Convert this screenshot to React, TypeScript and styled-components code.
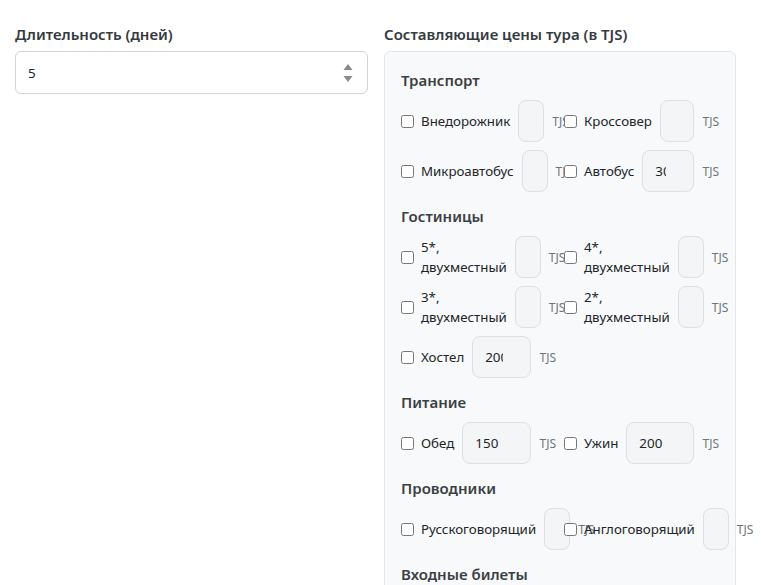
import React from "react";
import styled, { createGlobalStyle } from "styled-components";

const Global = createGlobalStyle`
  html, body { margin: 0; padding: 0; background: #fff; }
  body { font-family: "Noto Sans", "Open Sans", sans-serif; color: #212529; }
  * { box-sizing: border-box; }
`;

const Page = styled.div`
  display: grid;
  grid-template-columns: 353px 352px;
  column-gap: 16px;
  padding: 24px 0 0 15px;
  align-items: start;
`;

const Column = styled.div`
  display: flex;
  flex-direction: column;
  gap: 7px;
`;

const FieldLabel = styled.div`
  font-size: 15px;
  line-height: 20px;
  font-weight: 600;
  color: #343a40;
`;

const NumberField = styled.div`
  display: flex;
  align-items: center;
  height: 43px;
  border: 1px solid #ced4da;
  border-radius: 6px;
  background: #fff;
  padding: 0 14px 0 12px;
`;

const PlainInput = styled.input`
  flex: 1;
  min-width: 0;
  border: none;
  outline: none;
  background: transparent;
  font: inherit;
  font-size: 13.4px;
  color: #212529;
  padding: 0;
`;

const Box = styled.div`
  background: #f8f9fa;
  border: 1px solid #e4e7ea;
  border-radius: 6px;
  padding: 17px 16px 20px;
  display: flex;
  flex-direction: column;
  gap: 13px;
  min-height: 560px;
`;

const Section = styled.section`
  display: flex;
  flex-direction: column;
  gap: 9px;
`;

const SectionTitle = styled.div`
  font-size: 15px;
  line-height: 22px;
  font-weight: 600;
  color: #3a3f44;
`;

const Grid = styled.div`
  display: grid;
  grid-template-columns: 155px 155px;
  column-gap: 8px;
  row-gap: 8px;
`;

const Item = styled.div`
  display: flex;
  align-items: center;
  min-width: 0;
`;

const Check = styled.input`
  width: 13px;
  height: 13px;
  margin: 0 7px 0 0;
  flex: none;
`;

const ItemLabel = styled.label`
  font-size: 13.3px;
  line-height: 20px;
  color: #212529;
  flex: 0 1 auto;
  min-width: min-content;
  margin-right: 8px;
`;

const PriceInput = styled.input`
  flex: 1 1 0;
  width: 0;
  min-width: 0;
  height: 42px;
  padding: 0 12px;
  border: 1px solid #dcdfe3;
  border-radius: 8px;
  background: #f4f5f6;
  font: inherit;
  font-size: 13.4px;
  color: #212529;
  outline: none;
`;

const Currency = styled.span`
  flex: none;
  margin-left: 8px;
  font-size: 12px;
  color: #6c757d;
`;

type Entry = { name: string; value?: string };

const sections: { title: string; items: Entry[] }[] = [
  {
    title: "Транспорт",
    items: [
      { name: "Внедорожник" },
      { name: "Кроссовер" },
      { name: "Микроавтобус" },
      { name: "Автобус", value: "300" },
    ],
  },
  {
    title: "Гостиницы",
    items: [
      { name: "5*, двухместный" },
      { name: "4*, двухместный" },
      { name: "3*, двухместный" },
      { name: "2*, двухместный" },
      { name: "Хостел", value: "200" },
    ],
  },
  {
    title: "Питание",
    items: [
      { name: "Обед", value: "150" },
      { name: "Ужин", value: "200" },
    ],
  },
  {
    title: "Проводники",
    items: [{ name: "Русскоговорящий" }, { name: "Англоговорящий" }],
  },
  { title: "Входные билеты", items: [] },
];

const Spinner = () => (
  <svg width="10" height="20" viewBox="0 0 10 20" aria-hidden>
    <path d="M5 1 L9.5 7 H0.5 Z" fill="#8a8a8a" />
    <path d="M5 19 L9.5 13 H0.5 Z" fill="#8a8a8a" />
  </svg>
);

export default function App() {
  return (
    <>
      <Global />
      <Page>
        <Column>
          <FieldLabel>Длительность (дней)</FieldLabel>
          <NumberField>
            <PlainInput type="text" defaultValue="5" />
            <Spinner />
          </NumberField>
        </Column>
        <Column>
          <FieldLabel>Составляющие цены тура (в TJS)</FieldLabel>
          <Box>
            {sections.map((s) => (
              <Section key={s.title}>
                <SectionTitle>{s.title}</SectionTitle>
                {s.items.length > 0 && (
                  <Grid>
                    {s.items.map((it) => (
                      <Item key={it.name}>
                        <Check type="checkbox" />
                        <ItemLabel>{it.name}</ItemLabel>
                        <PriceInput type="number" defaultValue={it.value} />
                        <Currency>TJS</Currency>
                      </Item>
                    ))}
                  </Grid>
                )}
              </Section>
            ))}
          </Box>
        </Column>
      </Page>
    </>
  );
}
